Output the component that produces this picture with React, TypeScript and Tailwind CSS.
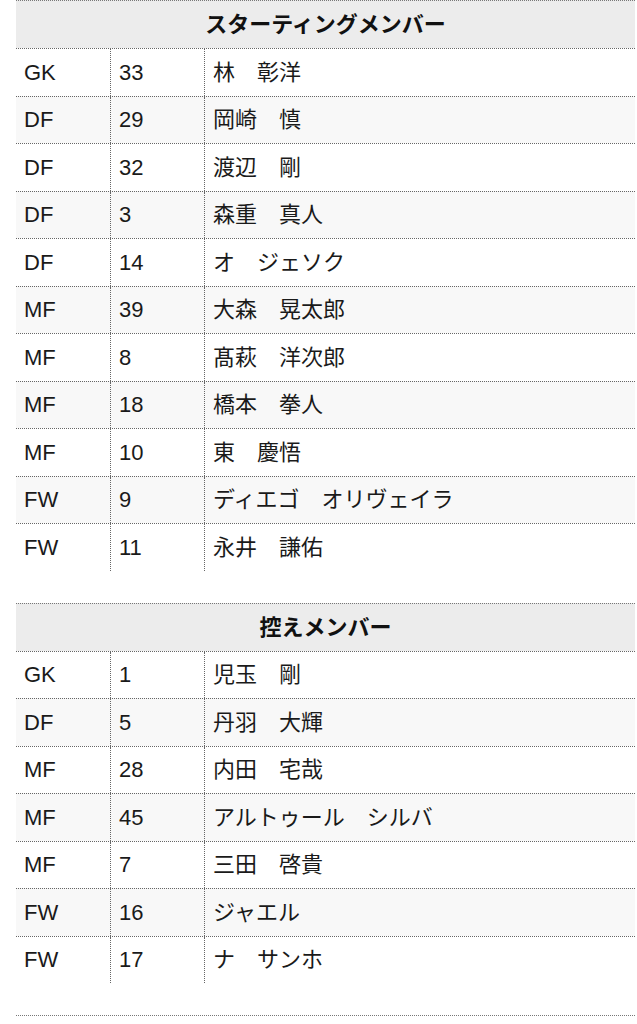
const starters: [string, string, string][] = [
  ['GK', '33', '林　彰洋'],
  ['DF', '29', '岡崎　慎'],
  ['DF', '32', '渡辺　剛'],
  ['DF', '3', '森重　真人'],
  ['DF', '14', 'オ　ジェソク'],
  ['MF', '39', '大森　晃太郎'],
  ['MF', '8', '髙萩　洋次郎'],
  ['MF', '18', '橋本　拳人'],
  ['MF', '10', '東　慶悟'],
  ['FW', '9', 'ディエゴ　オリヴェイラ'],
  ['FW', '11', '永井　謙佑'],
];

const subs: [string, string, string][] = [
  ['GK', '1', '児玉　剛'],
  ['DF', '5', '丹羽　大輝'],
  ['MF', '28', '内田　宅哉'],
  ['MF', '45', 'アルトゥール　シルバ'],
  ['MF', '7', '三田　啓貴'],
  ['FW', '16', 'ジャエル'],
  ['FW', '17', 'ナ　サンホ'],
];

function MemberTable({ title, rows }: { title: string; rows: [string, string, string][] }) {
  return (
    <div className="w-[619px] ml-4">
      {/* 見出し */}
      <div className="h-[48px] border-t border-dotted border-[#777] bg-[#ececec] flex items-center justify-center">
        <span className="text-[22px] font-bold text-[#111]">{title}</span>
      </div>
      {rows.map(([pos, num, name], i) => (
        <div
          key={i}
          className={`grid grid-cols-[94px_94px_1fr] h-[47.5px] border-t border-dotted border-[#666] ${
            i % 2 === 1 ? 'bg-[#f8f8f8]' : 'bg-white'
          }`}
        >
          <div className="flex items-center pl-2">{pos}</div>
          <div className="flex items-center pl-2 border-l border-dotted border-[#666]">{num}</div>
          <div className="flex items-center pl-2 border-l border-dotted border-[#666]">{name}</div>
        </div>
      ))}
    </div>
  );
}

export default function App() {
  return (
    <div
      className="w-[637px] h-[1024px] overflow-hidden bg-white text-[22px] text-[#1a1a1a]"
      style={{ fontFamily: '"Liberation Sans", "Noto Sans CJK JP", sans-serif' }}
    >
      <MemberTable title="スターティングメンバー" rows={starters} />
      <div className="mt-8">
        <MemberTable title="控えメンバー" rows={subs} />
      </div>
      <div className="mt-8 w-[619px] ml-4 border-t border-dotted border-[#777]" />
    </div>
  );
}
